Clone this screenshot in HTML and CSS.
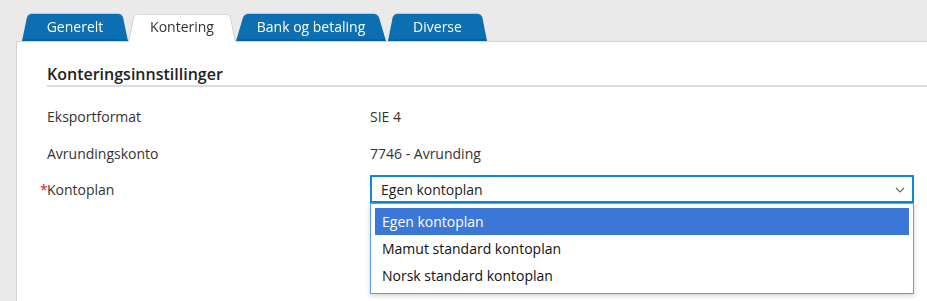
FILE: index.html
```html
<!DOCTYPE html>
<html lang="no">
<head>
  <meta charset="UTF-8">
  <title>Kontering</title>
  <link rel="stylesheet" href="styles.css">
</head>
<body>
  <div class="tabs">
    <div class="tab tab-general">Generelt</div>
    <div class="tab tab-posting active">Kontering</div>
    <div class="tab tab-bank">Bank og betaling</div>
    <div class="tab tab-misc">Diverse</div>
  </div>
  <div class="panel">
    <h2 class="section-title">Konteringsinnstillinger</h2>
    <div class="row">
      <div class="label">Eksportformat</div>
      <div class="value">SIE 4</div>
    </div>
    <div class="row">
      <div class="label">Avrundingskonto</div>
      <div class="value">7746 - Avrunding</div>
    </div>
    <div class="row row-select">
      <div class="label"><span class="req">*</span>Kontoplan</div>
      <div class="select-wrap">
        <div class="select">
          <span>Egen kontoplan</span>
          <svg class="chevron" width="10" height="6" viewBox="0 0 10 6"><path d="M1 1l4 4 4-4" fill="none" stroke="#666" stroke-width="1.2"/></svg>
        </div>
        <div class="options">
          <div class="option selected">Egen kontoplan</div>
          <div class="option">Mamut standard kontoplan</div>
          <div class="option">Norsk standard kontoplan</div>
        </div>
      </div>
    </div>
  </div>
</body>
</html>
```

FILE: styles.css
```css
* {
  box-sizing: border-box;
}

body {
  margin: 0;
  background: #eaeaea;
  font-family: "Open Sans", "Noto Sans", sans-serif;
  font-size: 14px;
  color: #333;
  height: 301px;
  overflow: hidden;
}

/* tabs */
.tabs {
  display: flex;
  padding: 10px 0 0 22px;
  height: 41px;
}

.tab {
  position: relative;
  z-index: 1;
  height: 31px;
  line-height: 34px;
  text-align: center;
  color: #fff;
  font-size: 14px;
}

.tab::before {
  content: "";
  position: absolute;
  top: 0;
  left: 0;
  right: 0;
  bottom: 0;
  z-index: -1;
  background: #0c6fb1;
  border-bottom: 2px solid #08609c;
  border-radius: 5px 5px 0 0;
  transform: perspective(40px) rotateX(9deg);
  transform-origin: bottom;
}

.tab-general { width: 106px; }
.tab-posting { width: 108px; }
.tab-bank { width: 150px; margin-right: 2px; }
.tab-misc { width: 99px; }

.tab.active {
  color: #333;
  z-index: 2;
  height: 32px;
}

.tab.active::before {
  background: #fff;
  border: 1px solid #cfcfcf;
  border-bottom: 0;
}

/* panel */
.panel {
  margin-left: 16px;
  background: #fff;
  border-left: 1px solid #d4d4d4;
  border-top: 1px solid #d4d4d4;
  padding: 21px 0 0 30px;
  height: 260px;
}

.section-title {
  margin: 0 0 11px;
  font-size: 16px;
  font-weight: 600;
  color: #222;
  line-height: 22px;
  padding-bottom: 0;
  border-bottom: 2px solid #dcdcdc;
}

.row {
  display: flex;
  align-items: center;
  height: 37px;
}

.label {
  width: 323px;
  position: relative;
}

.req {
  position: absolute;
  left: -7px;
  color: #d9251c;
}

.row-select {
  height: 28px;
  margin-top: 3px;
}

.select-wrap {
  position: relative;
  width: 544px;
}

.select {
  display: flex;
  align-items: center;
  justify-content: space-between;
  height: 28px;
  padding: 0 7px 0 9px;
  border: 2px solid #0a8ad8;
  background: #fff;
  color: #222;
}

.chevron {
  margin-top: 2px;
}

/* open list */
.options {
  position: absolute;
  top: 28px;
  left: 0;
  right: 0;
  height: 91px;
  background: #fff;
  border: 1px solid #5aa0ee;
  padding: 4px 4px 0;
  box-shadow: 0 2px 5px rgba(0, 0, 0, 0.18);
  color: #111;
}

.option {
  height: 27px;
  line-height: 28px;
  padding-left: 7px;
}

.option.selected {
  background: #3a77d7;
  color: #fff;
}
```
